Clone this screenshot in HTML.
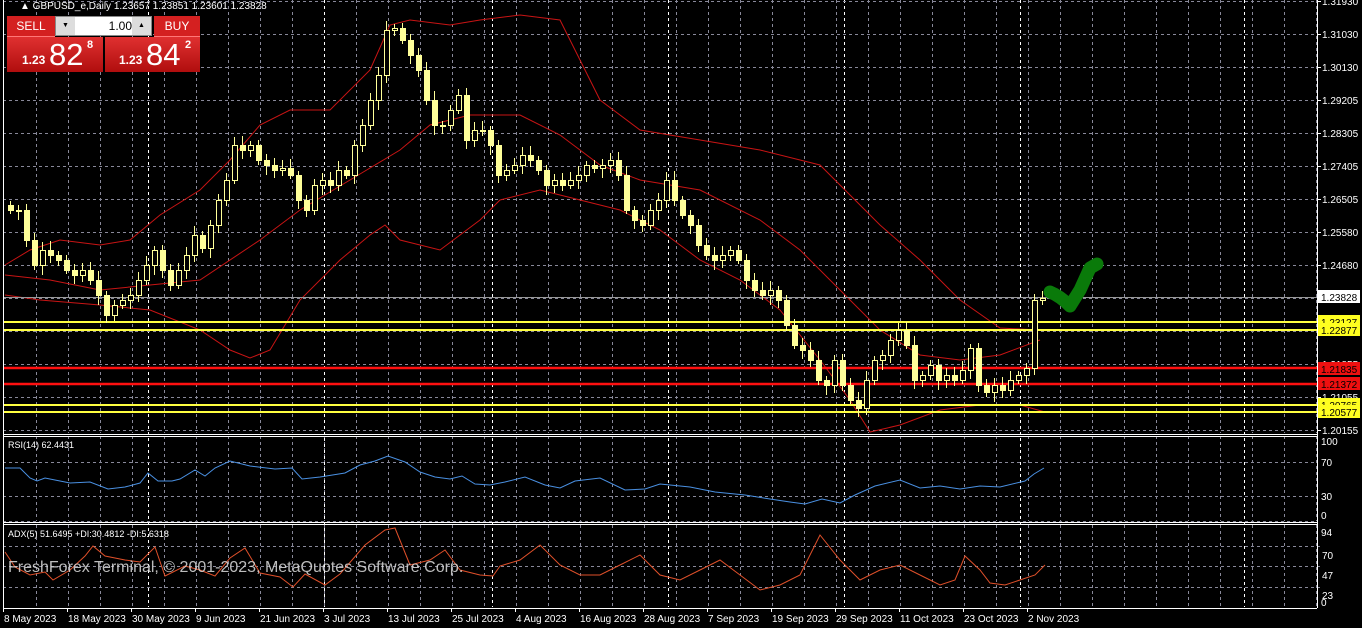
<!DOCTYPE html>
<html><head><meta charset="utf-8"><style>
html,body{margin:0;padding:0;background:#000;width:1362px;height:628px;overflow:hidden;font-family:"Liberation Sans",sans-serif}
svg{display:block}
.t{font-family:"Liberation Sans",sans-serif;font-size:10px;fill:#fff}
.panel{position:absolute;left:7px;top:7px;}
</style></head><body>
<svg id="s" width="1362" height="628" xmlns="http://www.w3.org/2000/svg"></svg>
<div style="position:absolute;left:7px;top:16px;width:193px;height:56px;">
 <div style="position:absolute;left:0;top:0;width:48px;height:20px;background:#d42020;color:#fff;font-size:12px;line-height:20px;text-align:center;border-bottom:1px solid #f77">SELL</div>
 <div style="position:absolute;left:48px;top:0;width:97px;height:20px;background:#fff;border:1px solid #888;box-sizing:border-box">
  <div style="position:absolute;left:0;top:0;width:19px;height:18px;background:#ddd;font-size:7px;text-align:center;line-height:18px">▼</div>
  <div style="position:absolute;left:20px;top:0;width:56px;height:18px;text-align:right;font-size:12px;line-height:18px">1.00</div>
  <div style="position:absolute;right:0;top:0;width:19px;height:18px;background:#ddd;font-size:7px;text-align:center;line-height:18px">▲</div>
 </div>
 <div style="position:absolute;left:147px;top:0;width:46px;height:20px;background:#d42020;color:#fff;font-size:12px;line-height:20px;text-align:center;border-bottom:1px solid #f77">BUY</div>
 <div style="position:absolute;left:0;top:21px;width:96px;height:35px;background:linear-gradient(#e03030,#b00e0e);color:#fff">
  <span style="position:absolute;left:15px;top:16px;font-size:12px;font-weight:bold">1.23</span>
  <span style="position:absolute;left:42px;top:0px;font-size:31px">82</span>
  <span style="position:absolute;left:80px;top:2px;font-size:11px;font-weight:bold">8</span>
 </div>
 <div style="position:absolute;left:98px;top:21px;width:95px;height:35px;background:linear-gradient(#e03030,#b00e0e);color:#fff">
  <span style="position:absolute;left:14px;top:16px;font-size:12px;font-weight:bold">1.23</span>
  <span style="position:absolute;left:41px;top:0px;font-size:31px">84</span>
  <span style="position:absolute;left:80px;top:2px;font-size:11px;font-weight:bold">2</span>
 </div>
</div>
<script>
var s=document.getElementById('s'),h='';
function L(x1,y1,x2,y2,c,w,d){h+='<line x1="'+x1+'" y1="'+y1+'" x2="'+x2+'" y2="'+y2+'" stroke="'+c+'" stroke-width="'+(w||1)+'"'+(d?' stroke-dasharray="'+d+'"':'')+'/>';}
function P(pts,c,w){h+='<polyline fill="none" stroke="'+c+'" stroke-width="'+(w||1)+'" points="'+pts.map(function(p){return p.join(',')}).join(' ')+'"/>';}
function T(x,y,t,c,sz){h+='<text x="'+x+'" y="'+y+'" font-family="Liberation Sans" font-size="'+(sz||10)+'" fill="'+(c||'#fff')+'">'+t+'</text>';}
// vertical grid
var months=[148,324,492,668,844,1020,1244];
for(var x=36;x<1317;x+=32){L(x+.5,0,x+.5,433,'#889','1','3,3');L(x+.5,436,x+.5,521,'#889',1,'3,3');L(x+.5,525,x+.5,607,'#889',1,'3,3');}
months.forEach(function(x){L(x+.5,0,x+.5,607,'#fff',1,'3,3');});
// horizontal grid main
var pl=[[1,'1.31930'],[34,'1.31030'],[67,'1.30130'],[100,'1.29205'],[133,'1.28305'],[166,'1.27405'],[199,'1.26505'],[232,'1.25580'],[265,'1.24680'],[298,''],[331,''],[364,'1.21855'],[397,'1.21055'],[430,'1.20155']];
pl.forEach(function(p){L(3,p[0]+.5,1317,p[0]+.5,'#889',1,'3,3');L(1317,p[0]+.5,1321,p[0]+.5,'#fff');if(p[1])T(1322,p[0]+4,p[1]);});
// RSI / ADX grids
[[462,'70'],[496,'30']].forEach(function(p){L(3,p[0]+.5,1317,p[0]+.5,'#889',1,'3,3');T(1321,p[0]+4,p[1]);});
T(1321,445,'100');T(1321,519,'0');L(3,521.5,1317,521.5,'#889',1,'3,3');
[[546,'70'],[566,'47'],[587,'23']].forEach(function(p){L(3,p[0]+.5,1320,p[0]+.5,'#889',1,'3,3');});
T(1321,536,'94');T(1322,559,'70');T(1322,579,'47');T(1322,599,'23');T(1321,606,'0');
// Bollinger
P([[5,265],[30,250],[60,240],[100,245],[130,240],[160,215],[200,190],[230,160],[260,125],[290,110],[330,110],[370,70],[390,25],[410,20],[450,25],[480,20],[520,15],[560,20],[580,60],[600,100],[640,130],[700,140],[760,150],[820,165],[850,195],[880,225],[920,260],[960,300],[1000,328],[1040,330]],'#c81414');
P([[5,275],[50,280],[100,290],[150,285],[200,280],[260,240],[300,210],[350,180],[400,150],[430,125],[470,115],[520,115],[560,135],[600,165],[640,180],[700,190],[760,220],[800,250],[840,290],[880,330],[920,355],[960,360],[1000,355],[1040,340]],'#c81414');
P([[5,295],[40,300],[100,305],[150,310],[200,330],[230,350],[250,358],[270,350],[300,300],[340,260],[370,235],[385,225],[400,240],[440,250],[480,220],[500,200],[540,190],[580,200],[620,210],[660,230],[700,260],[740,280],[780,310],[820,360],[850,400],[870,432],[900,425],[940,410],[980,405],[1020,405],[1045,412]],'#c81414');
// horizontal levels
L(3,322,1317,322,'#ffff40',2);L(3,330,1317,330,'#ffff40',2);
L(3,368,1317,368,'#ff1010',2.5);L(3,384,1317,384,'#ff1010',2.5);
L(3,405,1317,405,'#ffff40',2);L(3,412,1317,412,'#ffff40',2);
L(3,297.5,1317,297.5,'#999',1);
// candles
var c=[[10,210],[18,210],[26,240],[34,265],[42,250],[50,255],[58,260],[66,270],[74,275],[82,270],[90,280],[98,295],[106,315],[114,305],[122,300],[130,295],[138,280],[146,265],[154,250],[162,270],[170,285],[178,270],[186,255],[194,235],[202,248],[210,225],[218,200],[226,180],[234,145],[242,150],[250,145],[258,160],[266,165],[274,170],[282,168],[290,175],[298,200],[306,210],[314,185],[322,180],[330,185],[338,170],[346,175],[354,145],[362,125],[370,100],[378,75],[386,30],[394,28],[402,40],[410,55],[418,70],[426,100],[434,125],[442,125],[450,110],[458,95],[466,140],[474,130],[482,130],[490,145],[498,175],[506,170],[514,165],[522,155],[530,160],[538,170],[546,185],[554,180],[562,185],[570,180],[578,175],[586,165],[594,168],[602,165],[610,160],[618,175],[626,210],[634,220],[642,225],[650,210],[658,200],[666,180],[674,200],[682,215],[690,225],[698,245],[706,255],[714,260],[722,255],[730,250],[738,260],[746,280],[754,290],[762,295],[770,290],[778,300],[786,325],[794,345],[802,350],[810,360],[818,380],[826,385],[834,360],[842,385],[850,400],[858,408],[866,380],[874,360],[882,355],[890,340],[898,330],[906,345],[914,380],[922,375],[930,365],[938,380],[946,375],[954,380],[962,370],[970,348],[978,385],[986,392],[994,385],[1002,390],[1010,380],[1018,375],[1026,368],[1034,300],[1042,298]];
var prev=205;
c.forEach(function(p,i){var x=p[0],cl=p[1],op=(i==c.length-1?300:prev);var top=Math.min(op,cl),bot=Math.max(op,cl);if(bot-top<1)bot=top+1;
var hi=top-4-(i*7%6),lo=bot+4+(i*5%7);L(x+.5,hi,x+.5,lo,'#ffff99');
if(cl<op)h+='<rect x="'+(x-2)+'.5" y="'+top+'.5" width="5" height="'+(bot-top)+'" fill="#000" stroke="#ffff99"/>';
else h+='<rect x="'+(x-2)+'.5" y="'+top+'.5" width="5" height="'+(bot-top)+'" fill="#ffff99" stroke="#ffff99"/>';prev=cl;});
// green mark
h+='<path d="M1050 292 Q1060 296 1070 306 L1080 290 L1090 268 L1097 264" fill="none" stroke="#0a7a0a" stroke-width="13" stroke-linecap="round" stroke-linejoin="round"/>';
// price labels boxes
function B(y,t,bg,fg){h+='<rect x="1318" y="'+(y-7)+'" width="42" height="13" fill="'+bg+'"/>';T(1321,y+4,t,fg);}
B(297,'1.23828','#fff','#000');B(322,'1.23127','#ffff20','#000');B(330,'1.22877','#ffff20','#000');
B(369,'1.21835','#ee1010','#000');B(384,'1.21372','#ee1010','#000');B(405,'1.20765','#ffff20','#000');B(412,'1.20577','#ffff20','#000');
// panel borders
L(1317.5,0,1317.5,608,'#fff');
L(3,434.5,1317,434.5,'#fff');L(3,436.5,1317,436.5,'#fff');
L(3,522.5,1317,522.5,'#fff');L(3,524.5,1317,524.5,'#fff');
L(3,608.5,1317,608.5,'#fff');L(3.5,0,3.5,608,'#fff');
// RSI
P([[5,468],[20,468],[30,478],[37,481],[45,478],[60,481],[70,483],[90,482],[108,489],[125,487],[140,483],[148,473],[158,481],[172,481],[180,479],[195,470],[205,476],[215,468],[230,461],[250,466],[275,469],[292,468],[302,479],[320,477],[345,473],[360,465],[375,461],[388,456],[405,462],[420,472],[435,477],[450,479],[462,476],[475,484],[490,485],[505,482],[525,477],[545,485],[560,488],[575,481],[600,478],[625,490],[645,489],[660,484],[690,487],[715,492],[745,495],[770,499],[790,502],[805,504],[822,499],[840,503],[855,495],[875,486],[900,480],[920,488],[940,486],[960,489],[980,486],[1000,487],[1025,481],[1034,474],[1044,468]],'#4a90e2');
// ADX
P([[5,552],[15,567],[30,575],[45,572],[53,580],[70,570],[85,556],[93,546],[105,556],[125,560],[140,562],[155,547],[165,576],[185,566],[200,570],[215,576],[230,558],[245,548],[260,573],[280,577],[293,587],[305,574],[325,585],[340,574],[365,545],[385,530],[395,528],[410,565],[430,560],[445,550],[460,570],[480,575],[493,576],[500,566],[520,560],[540,545],[560,565],[580,575],[600,575],[620,565],[640,555],[660,575],[680,580],[700,570],[720,560],[740,575],[760,590],[780,585],[800,575],[820,535],[840,560],[860,580],[880,570],[900,565],[920,575],[940,585],[955,580],[965,556],[980,570],[990,583],[1005,585],[1020,580],[1035,575],[1045,565]],'#e0502a');
// texts
T(20,9,'&#9650; GBPUSD_e,Daily  1.23657 1.23851 1.23601 1.23828','#fff',10);
T(8,448,'RSI(14) 62.4431','#fff',9);
T(8,537,'ADX(5) 51.6495 +DI:30.4812 -DI:5.6318','#fff',9);
h+='<text x="8" y="572" font-family="Liberation Sans" font-size="16" fill="#ddd" fill-opacity="0.85">FreshForex Terminal, © 2001-2023, MetaQuotes Software Corp.</text>';
var d=['8 May 2023','18 May 2023','30 May 2023','9 Jun 2023','21 Jun 2023','3 Jul 2023','13 Jul 2023','25 Jul 2023','4 Aug 2023','16 Aug 2023','28 Aug 2023','7 Sep 2023','19 Sep 2023','29 Sep 2023','11 Oct 2023','23 Oct 2023','2 Nov 2023'];
d.forEach(function(t,i){var x=3+i*64;L(x+.5,608,x+.5,612,'#fff');T(x+1,622,t);});
s.innerHTML=h;
</script>
</body></html>
